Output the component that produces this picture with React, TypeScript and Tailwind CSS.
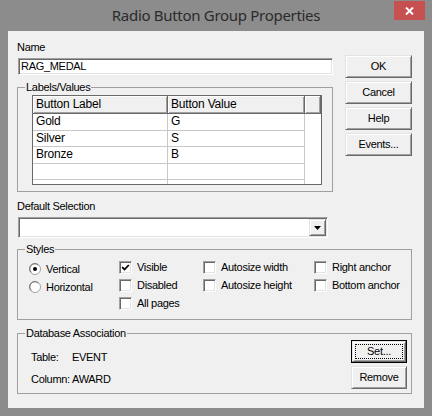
import React from 'react';

const sunken =
  'bg-white border border-t-[#a0a0a0] border-l-[#a0a0a0] border-r-white border-b-white shadow-[inset_1px_1px_0_#696969,inset_-1px_-1px_0_#e3e3e3]';
const raised =
  'bg-[#f0f0f0] border border-t-[#e3e3e3] border-l-[#e3e3e3] border-r-[#696969] border-b-[#696969] shadow-[inset_1px_1px_0_#ffffff,inset_-1px_-1px_0_#a0a0a0]';
const headerCell =
  'bg-[#f0f0f0] border-r border-b border-r-[#696969] border-b-[#696969] shadow-[inset_1px_1px_0_#ffffff,inset_-1px_-1px_0_#a0a0a0]';

function Btn({ label, w = 'w-[67px]' }: { label: string; w?: string }) {
  return (
    <button className={`${raised} ${w} h-[23px] flex items-center justify-center leading-[13px]`}>
      {label}
    </button>
  );
}

function Check({ label, checked = false }: { label: string; checked?: boolean }) {
  return (
    <div className="flex items-center h-[18px]">
      <span className={`${sunken} w-[13px] h-[13px] shrink-0 flex items-center justify-center`}>
        {checked && (
          <svg width="9" height="9" viewBox="0 0 9 9">
            <path d="M1.2 4.2 L3.5 6.5 L7.8 2" stroke="#000" strokeWidth="1.8" fill="none" />
          </svg>
        )}
      </span>
      <span className="ml-[5px] whitespace-nowrap">{label}</span>
    </div>
  );
}

function Radio({ label, checked = false }: { label: string; checked?: boolean }) {
  return (
    <div className="flex items-center h-[18px]">
      <svg width="12" height="12" viewBox="0 0 12 12" className="shrink-0">
        <circle cx="6" cy="6" r="5.5" fill="#fff" stroke="#a0a0a0" />
        <path d="M2.2 9.2 A4.5 4.5 0 0 1 9.2 2.2" stroke="#696969" fill="none" />
        {checked && <circle cx="6" cy="6" r="2" fill="#000" />}
      </svg>
      <span className="ml-[5px] whitespace-nowrap">{label}</span>
    </div>
  );
}

const rows = [
  ['Gold', 'G'],
  ['Silver', 'S'],
  ['Bronze', 'B'],
  ['', ''],
  ['', ''],
];

export default function App() {
  return (
    <div className="w-[432px] h-[416px] bg-[#8c8c8c] flex flex-col overflow-hidden">
      {/* title bar */}
      <div className="h-[31px] flex shrink-0">
        <div className="w-[38px]" />
        <div className="flex-1 flex items-center justify-center text-[15px] tracking-[-0.3px] text-[#2b2b2b] font-['Noto_Sans',sans-serif]">
          Radio Button Group Properties
        </div>
        <div className="w-[31px] h-[19px] mt-[1px] mr-[7px] bg-[#c75050] flex items-center justify-center">
          <svg width="9" height="8" viewBox="0 0 9 8">
            <path d="M1 0.5 L8 7.5 M8 0.5 L1 7.5" stroke="#fff" strokeWidth="1.9" />
          </svg>
        </div>
      </div>

      {/* client area */}
      <div className="mx-[8px] h-[377px] bg-[#f0f0f0] pl-[9px] pr-[13px] pt-[10px] text-[11px] leading-[13px] tracking-[-0.3px] text-black font-['Liberation_Sans',Arial,sans-serif]">
        <div className="flex items-start">
          <div className="w-[317px]">
            <div>Name</div>
            <div className={`${sunken} mt-[4px] ml-[1px] w-[315px] h-[17px] flex items-center pl-[2px]`}>RAG_MEDAL</div>

            <fieldset className="mt-[6px] border border-[#a0a0a0] pb-[6px]">
              <legend className="ml-[7px] px-[1px]">Labels/Values</legend>
              <div className="mt-[1px] ml-[14px] w-[290px] h-[90px] border border-[#696969] bg-white overflow-hidden flex text-[12px] tracking-[-0.2px]">
                <div className="w-[272px] flex flex-col">
                  <div className="flex h-[18px] shrink-0">
                    <div className={`${headerCell} w-[135px] pl-[3px] flex items-center`}>Button Label</div>
                    <div className={`${headerCell} w-[137px] pl-[3px] flex items-center`}>Button Value</div>
                  </div>
                  {rows.map((r, i) => (
                    <div key={i} className="flex h-[16.5px] shrink-0">
                      <div className="w-[135px] border-r border-b border-[#c8c8c8] pl-[3px] flex items-center">{r[0]}</div>
                      <div className="w-[137px] border-r border-b border-[#c8c8c8] pl-[3px] flex items-center">{r[1]}</div>
                    </div>
                  ))}
                </div>
                <div className="w-[16px] flex flex-col">
                  <div className={`${headerCell} h-[18px]`} />
                </div>
              </div>
            </fieldset>
          </div>

          <div className="ml-[12px] mt-[14px] flex flex-col gap-[3px]">
            <Btn label="OK" />
            <Btn label="Cancel" />
            <Btn label="Help" />
            <Btn label="Events..." />
          </div>
        </div>

        <div className="mt-[8px]">Default Selection</div>
        <div className={`${sunken} mt-[4px] ml-[1px] w-[310px] h-[21px] flex items-center justify-end pr-[1px]`}>
          <div className={`${raised} w-[17px] h-[17px] flex items-center justify-center`}>
            <svg width="7" height="4" viewBox="0 0 7 4">
              <polygon points="0,0 7,0 3.5,4" fill="#000" />
            </svg>
          </div>
        </div>

        <fieldset className="mt-[5px] w-[395px] border border-[#a0a0a0] pb-[7px]">
          <legend className="ml-[7px] px-[1px]">Styles</legend>
          <div className="mt-[2px] pl-[11px] flex">
            <div className="w-[90px] pt-[2px] flex flex-col">
              <Radio label="Vertical" checked />
              <Radio label="Horizontal" />
            </div>
            <div className="w-[84px] flex flex-col">
              <Check label="Visible" checked />
              <Check label="Disabled" />
              <Check label="All pages" />
            </div>
            <div className="w-[111px] flex flex-col">
              <Check label="Autosize width" />
              <Check label="Autosize height" />
            </div>
            <div className="flex flex-col">
              <Check label="Right anchor" />
              <Check label="Bottom anchor" />
            </div>
          </div>
        </fieldset>

        <fieldset className="mt-[7px] w-[395px] border border-[#a0a0a0] pb-[4px]">
          <legend className="ml-[7px] px-[1px]">Database Association</legend>
          <div className="flex justify-between">
            <div className="pl-[13px] pt-[11px] flex flex-col gap-[9px]">
              <div className="flex">
                <span className="w-[41px]">Table:</span>
                <span>EVENT</span>
              </div>
              <div>Column: AWARD</div>
            </div>
            <div className="pr-[4px] flex flex-col gap-[3px]">
              <button className="w-[56px] h-[23px] border border-black flex">
                <div className={`${raised} flex-1 flex p-[2px]`}>
                  <div className="flex-1 border border-dotted border-black flex items-center justify-center leading-[13px]">
                    Set...
                  </div>
                </div>
              </button>
              <Btn label="Remove" w="w-[56px]" />
            </div>
          </div>
        </fieldset>
      </div>
    </div>
  );
}
